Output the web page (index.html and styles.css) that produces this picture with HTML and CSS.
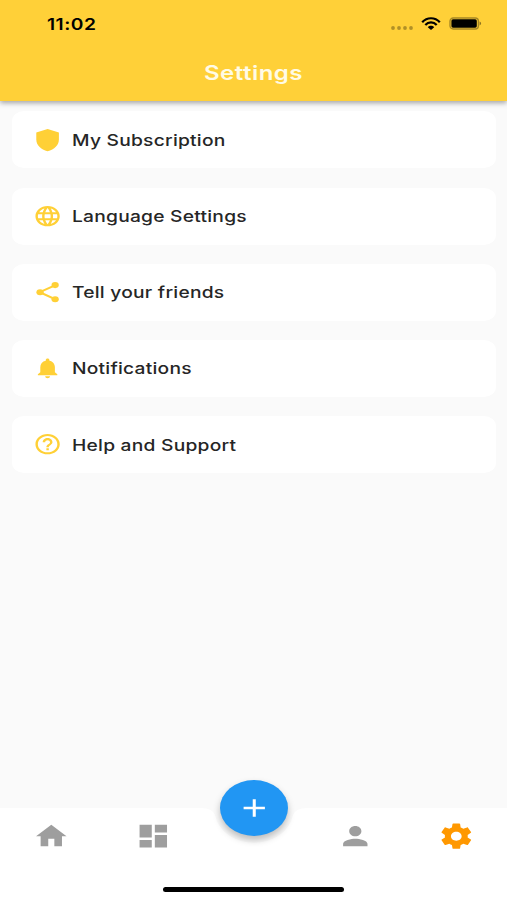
FILE: index.html
```
<!DOCTYPE html>
<html lang="en">
	<head>
		<meta charset="UTF-8">
		<title>Settings</title>
		<link rel="stylesheet" href="styles.css">
	</head>
	<body>
		<div class="phone">
			<header class="header">
				<div class="status">
					<span class="time">11:02</span>
					<div class="signals">
						<svg class="dots" viewBox="0 0 24 4"><circle cx="3" cy="2" r="1.9"/><circle cx="9" cy="2" r="1.9"/><circle cx="15" cy="2" r="1.9"/><circle cx="21" cy="2" r="1.9"/></svg>
						<svg class="wifi" viewBox="0 0 20 13" preserveAspectRatio="none">
							<path d="M1.2 5.2C6-.1 14-.1 18.8 5.2M4.3 8C7.5 4.5 12.5 4.5 15.7 8" fill="none" stroke="#000" stroke-width="2.2"/>
							<path d="M6.8 10.2C8.6 8.3 11.4 8.3 13.2 10.2L10 13z"/>
						</svg>
						<svg class="battery" viewBox="0 0 34 13">
							<rect x="1" y="1" width="28.4" height="11" rx="3.2" fill="none" stroke="#000" stroke-opacity=".35" stroke-width="1.4"/>
							<rect x="2.4" y="2.3" width="25.4" height="8.4" rx="1.6"/>
							<path d="M30.6 4.6v3.8c2-.6 2-3.2 0-3.8z" fill-opacity=".45"/>
						</svg>
					</div>
				</div>
				<h1 class="title">Settings</h1>
			</header>
			<ul class="list">
				<li class="item">
					<svg class="icon" viewBox="0 0 24 24" preserveAspectRatio="none"><path d="M12 1 2.7 4.4V11c0 6 3.7 10 9.3 12 5.6-2 9.3-6 9.3-12V4.4z"/></svg>
					<span class="label">My Subscription</span>
				</li>
				<li class="item">
					<svg class="icon" viewBox="0 0 24 24" preserveAspectRatio="none"><path d="M11.99 2C6.47 2 2 6.48 2 12s4.47 10 9.99 10C17.52 22 22 17.52 22 12S17.52 2 11.99 2zm6.93 6h-2.95c-.32-1.25-.78-2.45-1.38-3.56 1.84.63 3.37 1.91 4.33 3.56zM12 4.04c.83 1.2 1.48 2.53 1.91 3.96h-3.82c.43-1.43 1.08-2.76 1.91-3.96zM4.26 14C4.1 13.36 4 12.69 4 12s.1-1.36.26-2h3.38c-.08.66-.14 1.32-.14 2s.06 1.34.14 2H4.26zm.82 2h2.95c.32 1.25.78 2.45 1.38 3.56-1.84-.63-3.37-1.9-4.33-3.56zm2.95-8H5.08c.96-1.66 2.49-2.93 4.33-3.56C8.81 5.55 8.35 6.75 8.03 8zM12 19.96c-.83-1.2-1.48-2.53-1.91-3.96h3.82c-.43 1.43-1.08 2.76-1.91 3.96zM14.34 14H9.66c-.09-.66-.16-1.32-.16-2s.07-1.35.16-2h4.68c.09.65.16 1.32.16 2s-.07 1.34-.16 2zm.25 5.56c.6-1.11 1.06-2.31 1.38-3.56h2.95c-.96 1.65-2.49 2.93-4.33 3.56zM16.36 14c.08-.66.14-1.32.14-2s-.06-1.34-.14-2h3.38c.16.64.26 1.31.26 2s-.1 1.36-.26 2h-3.38z"/></svg>
					<span class="label">Language Settings</span>
				</li>
				<li class="item">
					<svg class="icon" viewBox="0 0 24 24" preserveAspectRatio="none"><path d="M18.5 5 5.5 12l13 7" fill="none" stroke="#ffd036" stroke-width="1.9"/><circle cx="18.2" cy="5" r="3"/><circle cx="5.8" cy="12" r="3"/><circle cx="18.2" cy="19" r="3"/></svg>
					<span class="label">Tell your friends</span>
				</li>
				<li class="item">
					<svg class="icon" viewBox="0 0 24 24" preserveAspectRatio="none"><path d="M12 22c1.1 0 2-.9 2-2h-4c0 1.1.89 2 2 2zm6-6v-5c0-3.07-1.64-5.64-4.5-6.32V4c0-.83-.67-1.5-1.5-1.5s-1.5.67-1.5 1.5v.68C7.63 5.36 6 7.92 6 11v5l-2 2v1h16v-1l-2-2z"/></svg>
					<span class="label">Notifications</span>
				</li>
				<li class="item">
					<svg class="icon" viewBox="0 0 24 24" preserveAspectRatio="none"><path d="M11 18h2v-2h-2v2zm1-16C6.48 2 2 6.48 2 12s4.48 10 10 10 10-4.48 10-10S17.52 2 12 2zm0 18c-4.41 0-8-3.59-8-8s3.59-8 8-8 8 3.59 8 8-3.59 8-8 8zm0-14c-2.21 0-4 1.79-4 4h2c0-1.1.9-2 2-2s2 .9 2 2c0 2-3 1.75-3 5h2c0-2.25 3-2.5 3-5 0-2.21-1.79-4-4-4z"/></svg>
					<span class="label">Help and Support</span>
				</li>
			</ul>
			<nav class="nav">
				<svg class="nav-bg" viewBox="0 0 507 92" preserveAspectRatio="none"><path d="M0 0H201Q212 0 215 7A39.5 33 0 0 0 293 7Q296 0 307 0H507V92H0z"/></svg>
				<div class="tabs">
					<a class="tab"><svg viewBox="0 0 24 24" preserveAspectRatio="none"><path d="M10 20v-6h4v6h5v-8h3L12 3 2 12h3v8z"/></svg></a>
					<a class="tab"><svg viewBox="0 0 24 24" preserveAspectRatio="none"><path d="M3 13h8V3H3v10zm0 8h8v-6H3v6zm10 0h8V11h-8v10zm0-18v6h8V3h-8z"/></svg></a>
					<span class="tab"></span>
					<a class="tab"><svg viewBox="0 0 24 24" preserveAspectRatio="none"><path d="M12 12c2.21 0 4-1.79 4-4s-1.79-4-4-4-4 1.79-4 4 1.79 4 4 4zm0 2c-2.67 0-8 1.34-8 4v2h16v-2c0-2.66-5.33-4-8-4z"/></svg></a>
					<a class="tab active"><svg viewBox="0 0 24 24" preserveAspectRatio="none"><path d="M19.43 12.98c.04-.32.07-.64.07-.98s-.03-.66-.07-.98l2.11-1.65c.19-.15.24-.42.12-.64l-2-3.46c-.12-.22-.39-.3-.61-.22l-2.49 1c-.52-.4-1.08-.73-1.69-.98l-.38-2.65C14.46 2.18 14.25 2 14 2h-4c-.25 0-.46.18-.49.42l-.38 2.65c-.61.25-1.17.59-1.69.98l-2.49-1c-.23-.09-.49 0-.61.22l-2 3.46c-.13.22-.07.49.12.64l2.11 1.65c-.04.32-.07.65-.07.98s.03.66.07.98l-2.11 1.65c-.19.15-.24.42-.12.64l2 3.46c.12.22.39.3.61.22l2.49-1c.52.4 1.08.73 1.69.98l.38 2.65c.03.24.24.42.49.42h4c.25 0 .46-.18.49-.42l.38-2.65c.61-.25 1.17-.59 1.69-.98l2.49 1c.23.09.49 0 .61-.22l2-3.46c.12-.22.07-.49-.12-.64l-2.11-1.65zM12 15.5c-1.93 0-3.5-1.57-3.5-3.5s1.57-3.5 3.5-3.5 3.5 1.57 3.5 3.5-1.57 3.5-3.5 3.5z"/></svg></a>
				</div>
				<button class="add"><svg viewBox="0 0 24 24" preserveAspectRatio="none"><path d="M19 13h-6v6h-2v-6H5v-2h6V5h2v6h6v2z"/></svg></button>
				<div class="home-bar"></div>
			</nav>
		</div>
	</body>
</html>
```
FILE: styles.css
```
*{
	padding: 0;
	margin: 0;
	box-sizing: border-box;
}
body{
	font-family: Inter, "Liberation Sans", sans-serif;
	background: #fafafa;
}
ul{
	list-style: none;
}
svg{
	display: block;
}
.phone{
	display: flex;
	flex-direction: column;
	width: 507px;
	height: 900px;
	overflow: hidden;
}
.header{
	height: 101px;
	background: #ffd038;
	box-shadow: 0 2px 5px rgba(0,0,0,.35);
}
.status{
	display: flex;
	justify-content: space-between;
	align-items: center;
	height: 47px;
	padding: 0 24px 0 47px;
}
.time{
	font-size: 16px;
	font-weight: 600;
	letter-spacing: .4px;
	transform: scaleX(1.2);
	transform-origin: left;
}
.signals{
	display: flex;
	align-items: center;
}
.dots{
	width: 24px;
	height: 4px;
	margin: 8px 7px 0 0;
	opacity: .3;
}
.wifi{
	width: 20px;
	height: 13px;
	margin-right: 8px;
}
.battery{
	width: 34px;
	height: 13px;
}
.title{
	height: 52px;
	line-height: 52px;
	text-align: center;
	font-size: 20px;
	font-weight: 600;
	color: #fffbe6;
	letter-spacing: .4px;
	transform: scaleX(1.2);
}
.list{
	display: flex;
	flex: 1;
	flex-direction: column;
	gap: 19.2px;
	padding: 10.4px 11px 0 12px;
}
.item{
	display: flex;
	align-items: center;
	height: 57px;
	padding-left: 20.6px;
	background: #fff;
	border-radius: 12px / 10px;
}
.icon{
	width: 29.2px;
	height: 24.4px;
	margin-right: 10px;
	fill: #ffd036;
}
.label{
	font-size: 16px;
	font-weight: 500;
	color: #262626;
	letter-spacing: .2px;
	white-space: nowrap;
	transform: scaleX(1.2);
	transform-origin: left;
}
.nav{
	position: relative;
	height: 92px;
}
.nav-bg{
	position: absolute;
	left: 0;
	top: 0;
	width: 507px;
	height: 92px;
	fill: #fff;
}
.tabs{
	position: relative;
	display: flex;
	height: 57px;
	padding-left: 1px;
}
.tab{
	display: flex;
	flex: 1;
	align-items: center;
	justify-content: center;
	fill: #9e9e9e;
}
.tab svg{
	width: 36.6px;
	height: 30.4px;
}
.tab.active{
	fill: #ff9800;
}
/* floating button sits over the notch of the bar */
.add{
	position: absolute;
	left: 219.5px;
	top: -28.5px;
	display: flex;
	align-items: center;
	justify-content: center;
	width: 68.5px;
	height: 56.5px;
	border: 0;
	border-radius: 50%;
	background: #2196f3;
	box-shadow: 0 4px 7px rgba(0,0,0,.25);
}
.add svg{
	width: 36.5px;
	height: 30px;
	fill: #fff;
}
.home-bar{
	position: relative;
	width: 181px;
	height: 5px;
	margin: 22px auto 0;
	border-radius: 3px;
	background: #000;
}
```
